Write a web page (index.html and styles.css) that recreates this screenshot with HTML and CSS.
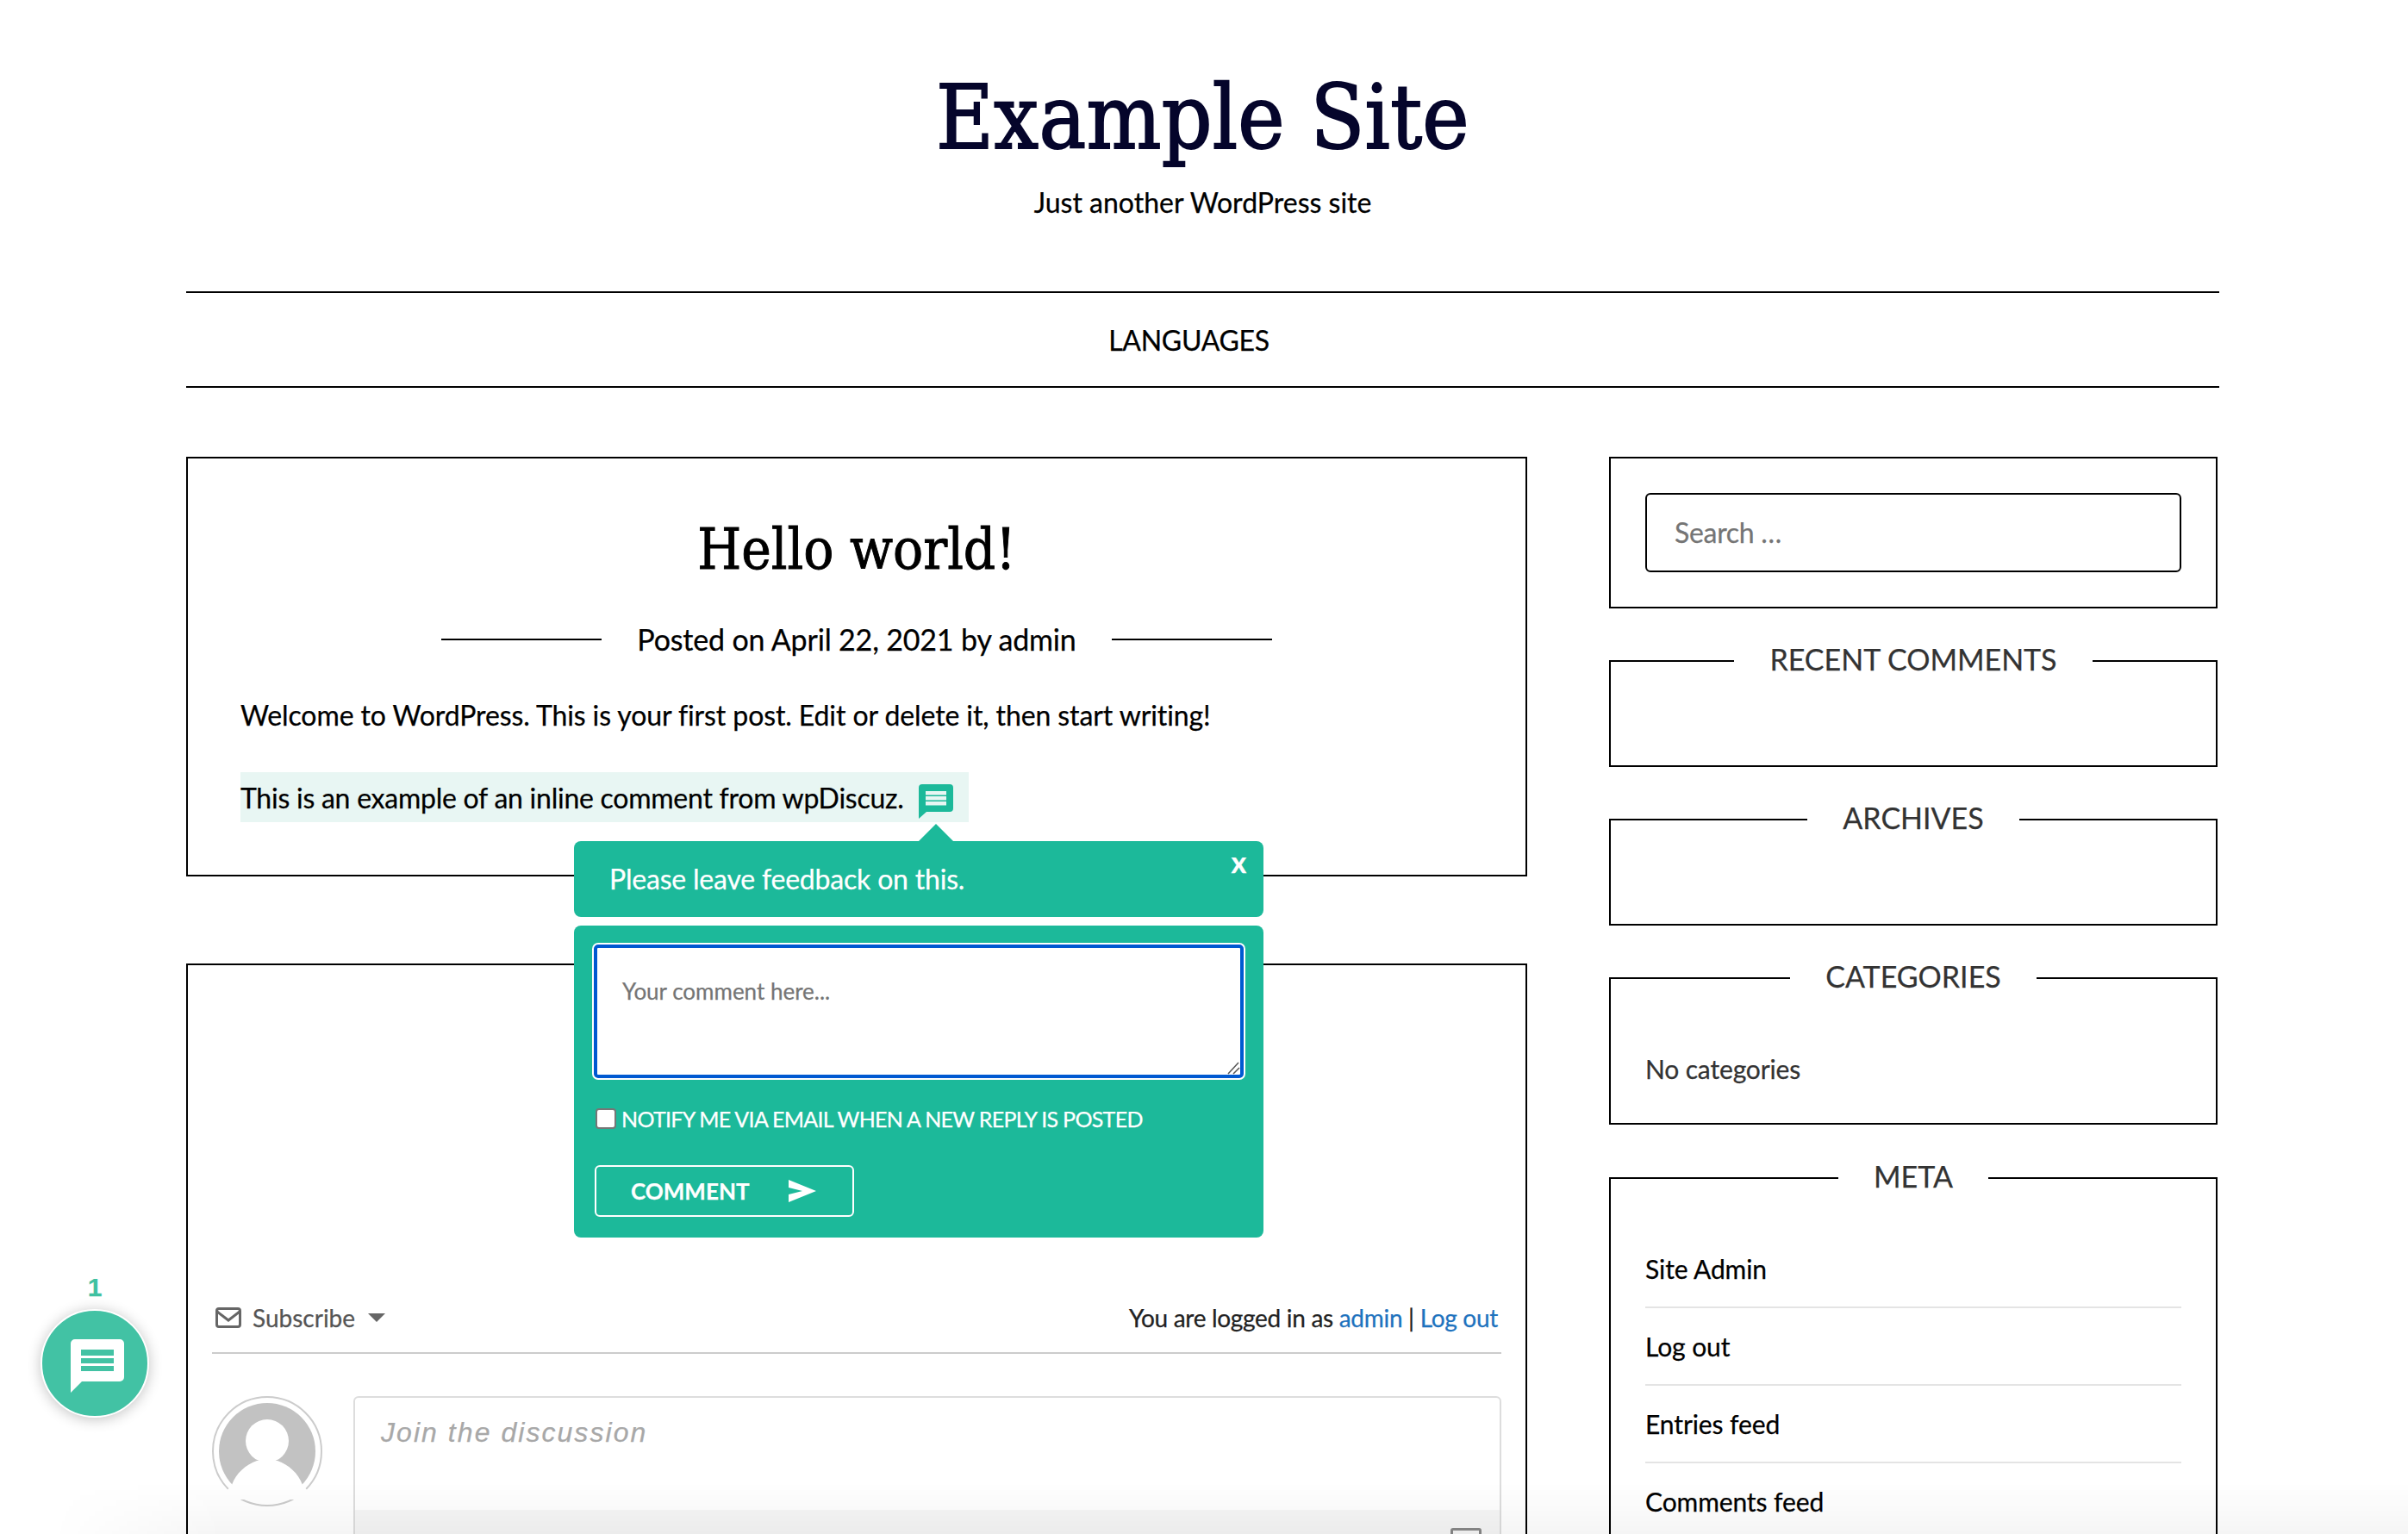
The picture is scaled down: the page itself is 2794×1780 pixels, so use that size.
FILE: index.html
```html
<!DOCTYPE html>
<html lang="en">
<head>
<meta charset="utf-8">
<title>Example Site</title>
<link rel="stylesheet" href="styles.css">
</head>
<body>
<div class="page">
  <header class="site-header">
    <h1 class="site-title">Example Site</h1>
    <p class="site-tagline">Just another WordPress site</p>
  </header>
  <nav class="site-nav"><a class="nav-link">LANGUAGES</a></nav>
  <div class="layout">
    <main class="main-col">
      <article class="post">
        <h2 class="post-title">Hello world!</h2>
        <div class="post-meta"><span class="meta-rule"></span><span>Posted on April 22, 2021 by admin</span><span class="meta-rule"></span></div>
        <p class="post-text">Welcome to WordPress. This is your first post. Edit or delete it, then start writing!</p>
        <p class="inline-row"><span class="inline-mark">This is an example of an inline comment from wpDiscuz.<svg class="inline-icon" viewBox="0 0 40 40"><path d="M4 0h32a4 4 0 0 1 4 4v24a4 4 0 0 1-4 4H9L0 40V4a4 4 0 0 1 4-4z" fill="#1cb99a"/><path d="M8 8h24v4.500H8zM8 14h24v4.500H8zM8 20h24v4.500H8z" fill="#e8f6f3"/></svg></span></p>
      </article>
      <section class="comments">
        <div class="comments-bar">
          <div class="subscribe">
            <svg class="envelope" viewBox="0 0 30 24"><rect x="1.500" y="1.500" width="27" height="21" rx="2.500" fill="none" stroke="#666" stroke-width="3"/><path d="M2 5l13 10L28 5" fill="none" stroke="#666" stroke-width="3"/></svg>
            <span>Subscribe</span>
            <span class="caret"></span>
          </div>
          <div class="login-note">You are logged in as <a class="blue">admin</a> | <a class="blue">Log out</a></div>
        </div>
        <div class="composer">
          <div class="avatar">
            <svg viewBox="0 0 112 112"><circle cx="56" cy="56" r="56" fill="#c2c2c2"/><circle cx="56" cy="44" r="25" fill="#fff"/><path d="M15 95C20 81 31 72 44 67h24c13 5 24 14 29 28l15 17H0z" fill="#fff"/></svg>
          </div>
          <div class="editor">
            <div class="editor-input">Join the discussion</div>
            <div class="editor-toolbar">
              <span class="toolbar-text">Hello there, what do you think about it?</span>
              <span class="toolbar-icon"></span>
            </div>
          </div>
        </div>
      </section>
    </main>
    <aside class="sidebar">
      <div class="widget search-widget"><div class="search-input">Search …</div></div>
      <div class="widget titled empty"><h3 class="widget-title"><span>RECENT COMMENTS</span></h3></div>
      <div class="widget titled empty"><h3 class="widget-title"><span>ARCHIVES</span></h3></div>
      <div class="widget titled cats-widget"><h3 class="widget-title"><span>CATEGORIES</span></h3><p class="no-cats">No categories</p></div>
      <div class="widget titled meta-widget"><h3 class="widget-title"><span>META</span></h3>
        <ul class="meta-list"><li>Site Admin</li><li>Log out</li><li>Entries feed</li><li>Comments feed</li></ul>
      </div>
    </aside>
  </div>
</div>

<div class="popup">
  <div class="popup-arrow"></div>
  <div class="popup-head"><span>Please leave feedback on this.</span><span class="popup-close">x</span></div>
  <div class="popup-form">
    <div class="fake-textarea">Your comment here...
      <svg class="grip" viewBox="0 0 16 16"><path d="M14 2L2 15M15 8l-7 7" fill="none" stroke="#555" stroke-width="1.500"/></svg>
    </div>
    <label class="notify"><input class="notify-box" type="checkbox"><span>NOTIFY ME VIA EMAIL WHEN A NEW REPLY IS POSTED</span></label>
    <div class="submit-btn"><span>COMMENT</span><svg class="send" viewBox="0 0 32 26"><path d="M0 0l32 13L0 26v-9l16-4L0 9z" fill="#fff"/></svg></div>
  </div>
</div>

<div class="bubble-wrap">
  <div class="bubble-count">1</div>
  <div class="bubble">
    <svg viewBox="0 0 62 62"><path d="M5 0h52a5 5 0 0 1 5 5v39a5 5 0 0 1-5 5H13L0 62V5a5 5 0 0 1 5-5z" fill="#fff"/><path d="M12 12h38v7H12zM12 22h38v6H12zM12 31h38v6H12z" fill="#42c2a4"/></svg>
  </div>
</div>
<div class="window-fade"></div>
</body>
</html>
```
FILE: styles.css
```css
* { box-sizing: border-box; }
html, body { margin: 0; padding: 0; background: #fff; }
body {
  font-family: "Lato", "Liberation Sans", sans-serif;
  font-size: 32px;
  color: #000;
  height: 1780px;
  overflow: hidden;
  position: relative;
  -webkit-text-stroke: 0.25px;
}
.page { padding: 0 219px 0 216px; }

.site-header { text-align: center; padding-top: 72px; height: 338px; }
.site-title {
  margin: 0;
  font-family: "DejaVu Serif Condensed", "DejaVu Serif", serif;
  font-stretch: condensed;
  font-weight: 400;
  font-size: 102px;
  line-height: 130px;
  color: #05052b;
  letter-spacing: 0.3px;
  -webkit-text-stroke: 1.8px;
}
.site-tagline { margin: 11px 0 0; line-height: 44px; font-size: 32px; }

.site-nav {
  border-top: 2px solid #000;
  border-bottom: 2px solid #000;
  height: 112px;
  display: flex;
  align-items: center;
  justify-content: center;
  padding-right: 32px;
  font-size: 32px;
  letter-spacing: -0.3px;
}

.layout { display: flex; gap: 95px; margin-top: 80px; align-items: flex-start; }
.main-col { width: 1556px; flex: none; }

.post { border: 2px solid #000; height: 487px; padding-top: 64px; position: relative; }
.post-title {
  margin: 0;
  text-align: center;
  font-family: "DejaVu Serif Condensed", "DejaVu Serif", serif;
  font-weight: 400;
  font-size: 65px;
  line-height: 84px;
  -webkit-text-stroke: 0.9px;
}
.post-meta { display: flex; justify-content: center; align-items: center; gap: 41px; margin-top: 40px; font-size: 34px; letter-spacing: -0.17px; line-height: 44px; }
.meta-rule { width: 186px; height: 2px; background: #000; }
.post-text { margin: 44px 0 0 61px; line-height: 44px; letter-spacing: -0.1px; }
.inline-row { margin: 0; padding: 44px 0 0 61px; }
.inline-mark {
  display: inline-flex;
  align-items: center;
  height: 58px;
  background: #e8f6f3;
  width: 845px;
  letter-spacing: -0.25px;
  white-space: nowrap;
}
.inline-icon { width: 40px; height: 40px; flex: none; margin-left: auto; margin-right: 18px; position: relative; top: 5px; }

.comments { border: 2px solid #000; border-bottom: none; margin-top: 101px; height: 800px; padding: 0 28px; }
.comments-bar {
  margin-top: 387px;
  height: 64px;
  border-bottom: 2px solid #ccc;
  display: flex;
  justify-content: space-between;
  align-items: flex-start;
  font-size: 28px;
  line-height: 42px;
  padding: 0 4px 0 4px;
}
.comments-bar > div { margin-top: 1px; }
.subscribe { display: flex; align-items: center; color: #555; }
.envelope { width: 30px; height: 24px; margin-right: 13px; }
.caret { width: 0; height: 0; margin-left: 15px; border-left: 10px solid transparent; border-right: 10px solid transparent; border-top: 10px solid #666; }
.login-note { color: #222; letter-spacing: -0.3px; }
.blue { color: #1e73be; }

.composer { display: flex; gap: 36px; margin-top: 49px; }
.avatar { width: 128px; height: 128px; border: 2px solid #ccc; border-radius: 50%; padding: 6px; flex: none; }
.avatar svg { display: block; width: 100%; height: 100%; }
.editor { flex: 1; height: 300px; border: 2px solid #ddd; border-radius: 6px; }
.editor-input {
  font-family: "Liberation Sans", sans-serif;
  font-style: italic;
  font-size: 32px;
  color: #a8a8a8;
  letter-spacing: 2.05px;
  padding: 21px 30px;
  height: 130px;
  line-height: 38px;
}
.editor-toolbar { background: #f6f6f6; height: 100px; padding: 22px 21px 0 140px; display: flex; justify-content: space-between; }
.toolbar-text { font-size: 27px; color: #666; line-height: 34px; }
.toolbar-icon { width: 36px; height: 30px; border: 3px solid #888; border-radius: 3px; margin-top: -1px; }

.sidebar { width: 706px; flex: none; }
.widget { border: 2px solid #000; }
.search-widget { height: 176px; padding: 40px 40px; margin-bottom: 60px; }
.search-input {
  height: 92px;
  border: 2px solid #000;
  border-radius: 6px;
  padding: 0 0 2px 32px;
  display: flex;
  align-items: center;
  color: #757575;
  letter-spacing: -0.3px;
}
.titled { position: relative; padding: 44px 40px 0; margin-bottom: 60px; }
.empty { height: 124px; }
.cats-widget { margin-bottom: 61px; }
.widget-title {
  position: absolute;
  top: -25px;
  left: 0;
  right: 0;
  margin: 0;
  text-align: center;
  font-weight: 400;
  font-size: 34px;
  line-height: 44px;
  color: #333;
}
.widget-title span { background: #fff; padding: 0 41px; }
.no-cats { margin: 38px 0 0; color: #333; line-height: 44px; font-size: 30px; height: 85px; letter-spacing: -0.15px; }
.meta-list { list-style: none; margin: 16px 0 0; padding: 0; font-size: 30px; letter-spacing: -0.1px; }
.meta-list li { height: 90px; line-height: 88px; border-bottom: 2px solid #e4e4e4; }
.meta-list li:last-child { border: none; }

.popup { position: absolute; left: 666px; top: 976px; width: 800px; }
.popup-arrow { position: absolute; left: 400px; top: -20px; width: 0; height: 0; border-left: 20px solid transparent; border-right: 20px solid transparent; border-bottom: 20px solid #1cb99a; }
.popup-head {
  height: 88px;
  background: #1cb99a;
  border-radius: 8px;
  color: #fff;
  padding: 20px 41px 0;
  font-size: 32px;
  line-height: 48px;
  letter-spacing: -0.2px;
  position: relative;
}
.popup-close { position: absolute; right: 20px; top: 0; font-size: 34px; font-weight: 700; line-height: 48px; }
.popup-form { margin-top: 10px; height: 362px; background: #1cb99a; border-radius: 8px; padding: 20px 21px 0; position: relative; }
.fake-textarea {
  height: 155px;
  background: #fff;
  border: 4px solid #0059d1;
  box-shadow: 0 0 0 2px #fff;
  border-radius: 5px;
  margin: 2px 2px 0;
  padding: 33px 29px;
  font-size: 26px;
  line-height: 34px;
  color: #757575;
  position: relative;
}
.grip { position: absolute; right: 0; bottom: 0; width: 16px; height: 16px; }
.notify { display: flex; align-items: center; margin: 32px 0 0 4px; height: 30px; color: #fff; font-size: 25px; letter-spacing: -0.7px; white-space: nowrap; }
.notify-box { appearance: none; width: 24px; height: 24px; margin: 0 6px 0 0; background: #fff; border: 2px solid #767676; border-radius: 4px; flex: none; }
.submit-btn {
  position: absolute;
  left: 24px;
  top: 278px;
  width: 301px;
  height: 60px;
  border: 2px solid #fff;
  border-radius: 6px;
  display: flex;
  align-items: center;
  padding-left: 40px;
  color: #fff;
  font-size: 26px;
  font-weight: 700;
}
.send { width: 32px; height: 26px; margin-left: 45px; }

.bubble-wrap { position: absolute; left: 47px; top: 1476px; width: 126px; }
.bubble-count { text-align: center; color: #3fc1a1; font-family: "Liberation Sans", sans-serif; font-weight: 700; font-size: 30px; line-height: 36px; }
.bubble {
  margin-top: 7px;
  width: 126px;
  height: 126px;
  border-radius: 50%;
  background: #42c2a4;
  border: 2px solid #fff;
  box-shadow: 0 2px 16px rgba(0,0,0,0.24);
  display: flex;
  align-items: center;
  justify-content: center;
}
.bubble svg { width: 62px; height: 62px; margin-left: 6px; margin-top: 6px; }

.window-fade {
  position: absolute;
  left: 0;
  right: 0;
  bottom: 0;
  height: 60px;
  background: linear-gradient(to bottom, rgba(0,0,0,0), rgba(0,0,0,0.04));
  -webkit-mask-image: linear-gradient(to right, transparent 60px, #000 260px);
  mask-image: linear-gradient(to right, transparent 60px, #000 260px);
  pointer-events: none;
}
```
